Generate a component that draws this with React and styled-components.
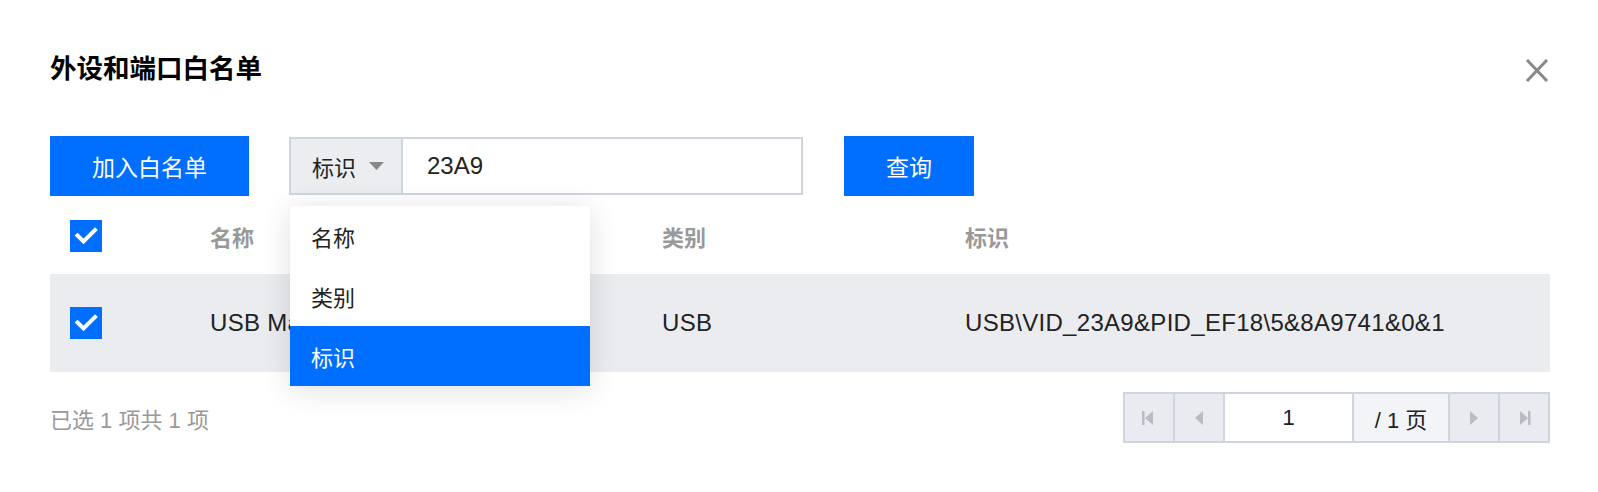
import React from 'react';
import styled, { createGlobalStyle } from 'styled-components';

const GlobalStyle = createGlobalStyle`
  body {
    margin: 0;
    background: #ffffff;
    font-family: "Liberation Sans", "Noto Sans CJK SC", sans-serif;
    color: #222;
  }
`;

const BLUE = '#006eff';
const LINE = '#cfd5de';

const Page = styled.div`
  width: 1598px;
  box-sizing: border-box;
  padding: 51px 48px 0 50px;
`;

const Header = styled.div`
  display: flex;
  justify-content: space-between;
  align-items: center;
  height: 36px;
`;

const Title = styled.h1`
  margin: 0;
  font-size: 26.5px;
  line-height: 36px;
  font-weight: 700;
  color: #000;
`;

const CloseIcon = styled.svg`
  margin-top: 4px;
  margin-right: 1px;
  cursor: pointer;
`;

const Toolbar = styled.div`
  display: flex;
  align-items: center;
  height: 60px;
  margin-top: 49px;
`;

const PrimaryButton = styled.button`
  width: ${p => p.$w}px;
  height: 60px;
  margin-right: ${p => p.$mr || 0}px;
  border: 0;
  background: ${BLUE};
  color: #fff;
  font-family: inherit;
  font-size: 23px;
  padding: 0;
`;

const SearchGroup = styled.div`
  position: relative;
  display: flex;
  height: 58px;
  box-sizing: border-box;
  border: 2px solid ${LINE};
  margin-right: 41px;
`;

const SelectBox = styled.div`
  display: flex;
  align-items: center;
  width: 112px;
  box-sizing: border-box;
  padding-left: 21px;
  background: #ebedf1;
  border-right: 2px solid ${LINE};
  font-size: 22px;
  color: #222;
`;

const Caret = styled.svg`
  margin-left: 13px;
`;

const SearchInput = styled.div`
  width: 398px;
  box-sizing: border-box;
  padding-left: 24px;
  display: flex;
  align-items: center;
  background: #fff;
  font-size: 24px;
  color: #222;
`;

const Menu = styled.ul`
  position: absolute;
  top: calc(100% + 13px);
  left: -1px;
  width: 300px;
  margin: 0;
  padding: 0;
  list-style: none;
  background: #fff;
  box-shadow: 0 4px 28px rgba(0, 0, 0, 0.13);
  z-index: 10;
`;

const MenuItem = styled.li`
  height: 60px;
  display: flex;
  align-items: center;
  padding-left: 21px;
  font-size: 22px;
  color: ${p => (p.$active ? '#fff' : '#222')};
  background: ${p => (p.$active ? BLUE : '#fff')};
`;

const Table = styled.div`
  margin-top: 2px;
`;

const Row = styled.div`
  display: grid;
  grid-template-columns: 140px 452px 303px 1fr;
  align-items: center;
  height: ${p => (p.$head ? 76 : 98)}px;
  background: ${p => (p.$head ? '#fff' : '#ebecf0')};
`;

const Cell = styled.div`
  padding-left: 20px;
  font-size: ${p => (p.$head ? 22 : 24)}px;
  font-weight: ${p => (p.$head ? 700 : 400)};
  letter-spacing: ${p => (p.$head ? 0 : 0.3)}px;
  color: ${p => (p.$head ? '#999' : '#222')};
  white-space: nowrap;
`;

const CheckBox = styled.span`
  display: flex;
  align-items: center;
  justify-content: center;
  width: 32px;
  height: 32px;
  background: ${BLUE};
`;

const Footer = styled.div`
  display: flex;
  justify-content: space-between;
  align-items: center;
  margin-top: 20px;
`;

const Summary = styled.span`
  font-size: 22px;
  color: #999;
`;

const Pager = styled.div`
  display: flex;
  height: 51px;
  box-sizing: border-box;
  border: 2px solid ${LINE};
`;

const PagerCell = styled.div`
  width: ${p => p.$w}px;
  display: flex;
  align-items: center;
  justify-content: center;
  font-size: 22px;
  color: #222;
  background: ${p => p.$bg};
  & + & {
    border-left: 2px solid ${LINE};
  }
`;

const Check = () => (
  <CheckBox>
    <svg width="32" height="32" viewBox="0 0 32 32">
      <path d="M7.5 15.5 L13.5 21.5 L25 10" fill="none" stroke="#fff" strokeWidth="4" strokeLinecap="square" />
    </svg>
  </CheckBox>
);

const PageIcon = ({ dir, edge }) => {
  const left = dir === 'left';
  return (
    <svg width="20" height="20" viewBox="0 0 20 20">
      {left ? <path d="M14 3 L6 10 L14 17 Z" fill="#b9bcc2" /> : <path d="M6 3 L14 10 L6 17 Z" fill="#b9bcc2" />}
      {edge && <rect x={left ? 3 : 14} y="3" width="2.5" height="14" fill="#b9bcc2" />}
    </svg>
  );
};

export default function App() {
  return (
    <Page>
      <GlobalStyle />
      <Header>
        <Title>外设和端口白名单</Title>
        <CloseIcon width="24" height="24" viewBox="0 0 24 24">
          <path d="M2 1 L22 22 M22 1 L2 22" stroke="#888" strokeWidth="3" />
        </CloseIcon>
      </Header>

      <Toolbar>
        <PrimaryButton $w={199} $mr={40}>加入白名单</PrimaryButton>
        <SearchGroup>
          <SelectBox>
            标识
            <Caret width="15" height="8" viewBox="0 0 15 8">
              <path d="M0 0 H15 L7.5 8 Z" fill="#888" />
            </Caret>
          </SelectBox>
          <SearchInput>23A9</SearchInput>
          <Menu>
            <MenuItem>名称</MenuItem>
            <MenuItem>类别</MenuItem>
            <MenuItem $active>标识</MenuItem>
          </Menu>
        </SearchGroup>
        <PrimaryButton $w={130}>查询</PrimaryButton>
      </Toolbar>

      <Table>
        <Row $head>
          <Cell $head><Check /></Cell>
          <Cell $head>名称</Cell>
          <Cell $head>类别</Cell>
          <Cell $head>标识</Cell>
        </Row>
        <Row>
          <Cell><Check /></Cell>
          <Cell>USB Mass Storage Device</Cell>
          <Cell>USB</Cell>
          <Cell>USB\VID_23A9&amp;PID_EF18\5&amp;8A9741&amp;0&amp;1</Cell>
        </Row>
      </Table>

      <Footer>
        <Summary>已选 1 项共 1 项</Summary>
        <Pager>
          <PagerCell $w={48} $bg="#e9ebf0"><PageIcon dir="left" edge /></PagerCell>
          <PagerCell $w={48} $bg="#e9ebf0"><PageIcon dir="left" /></PagerCell>
          <PagerCell $w={127} $bg="#fff">1</PagerCell>
          <PagerCell $w={94} $bg="#f2f4f8">/ 1 页</PagerCell>
          <PagerCell $w={48} $bg="#e9ebf0"><PageIcon dir="right" /></PagerCell>
          <PagerCell $w={48} $bg="#e9ebf0"><PageIcon dir="right" edge /></PagerCell>
        </Pager>
      </Footer>
    </Page>
  );
}
